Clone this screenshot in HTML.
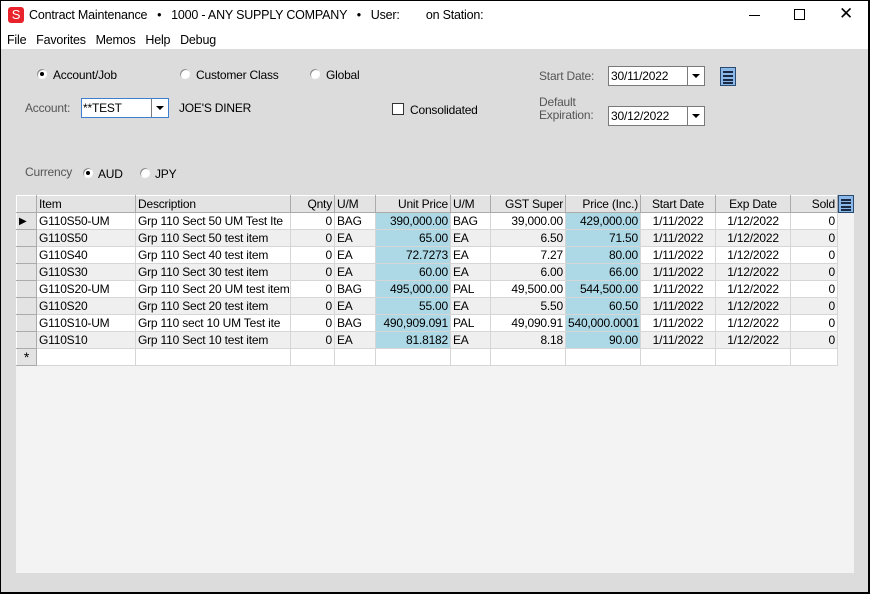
<!DOCTYPE html>
<html><head><style>
*{margin:0;padding:0;box-sizing:border-box}
body{width:870px;height:594px;overflow:hidden;background:#000;font-family:"Liberation Sans",sans-serif;font-size:12px;color:#000;position:relative;letter-spacing:-0.2px}
.a{position:absolute;white-space:nowrap}
#win{position:absolute;left:1px;top:1px;width:867px;height:591px;background:#dcdcdc}
#title{position:absolute;left:0;top:0;width:867px;height:30px;background:#fff}
#menu{position:absolute;left:0;top:30px;width:867px;height:18px;background:#fff}
.lbl{color:#555;}
.radio{position:absolute;width:12px;height:12px;border-radius:50%;background:#fff;border:1px solid #ddd;box-shadow:inset 1px 1px 0 #888}
.radio.on::after{content:"";position:absolute;left:3px;top:3px;width:4px;height:4px;border-radius:50%;background:#000}
.box{position:absolute;background:#fff;border:1px solid #7a7a7a}
.dd{position:absolute;right:0;top:0;bottom:0;width:17px;border-left:1px solid #7a7a7a;background:#fff}
.dd::after{content:"";position:absolute;left:4px;top:7px;border-left:4px solid transparent;border-right:4px solid transparent;border-top:4px solid #000}
.ham{position:absolute;background:#8ab8e8;border:1px solid #2a4a70}
.ham i{position:absolute;left:2px;right:2px;height:2px;background:#1a2a44}
table{border-collapse:collapse;position:absolute;left:15px;top:194px;table-layout:fixed;width:821px}
td{height:17px;border:1px solid #d6d6d6;padding:0 2px;font-size:12px;overflow:hidden;white-space:nowrap;line-height:15px}
tr.h td{background:#e3e3e3;border-color:#fff #ababab #ababab #fff;border-width:1px}
td.rh{background:#e3e3e3;border-color:#fff #ababab #ababab #fff}
.r{text-align:right}
.c{text-align:center}
tr.o td{background:#fff}
tr.e td{background:#efefef}
tr.o td.b,tr.e td.b{background:#add8e6}
tr td.rh{background:#e3e3e3 !important}
</style></head><body>
<div id="win">
<div id="title">
 <div class="a" style="left:7px;top:6px;width:16px;height:16px;background:#e8232c;border-radius:3px;color:#fff;font-size:13px;text-align:center;line-height:16px">S</div>
 <div class="a" style="left:28px;top:7px;font-size:12.5px">Contract Maintenance &nbsp;&nbsp;•&nbsp;&nbsp; 1000 - ANY SUPPLY COMPANY &nbsp;&nbsp;•&nbsp;&nbsp; User: &nbsp;&nbsp;&nbsp;&nbsp;&nbsp;&nbsp;&nbsp;on Station:</div>
 <div class="a" style="left:748px;top:14px;width:11px;height:1px;background:#000"></div>
 <div class="a" style="left:793px;top:8px;width:11px;height:11px;border:1px solid #000"></div>
 <div class="a" style="left:838px;top:3px;font-size:17px;line-height:20px">✕</div>
</div>
<div id="menu"><div class="a" style="left:6px;top:2px;font-size:12.5px">File &nbsp;&nbsp;Favorites &nbsp;&nbsp;Memos &nbsp;&nbsp;Help &nbsp;&nbsp;Debug</div></div>

<div class="radio on" style="left:35px;top:67px"></div><div class="a" style="left:52px;top:67px">Account/Job</div>
<div class="radio" style="left:178px;top:67px"></div><div class="a" style="left:195px;top:67px">Customer Class</div>
<div class="radio" style="left:308px;top:67px"></div><div class="a" style="left:325px;top:67px">Global</div>

<div class="a lbl" style="left:24px;top:100px">Account:</div>
<div class="box" style="left:80px;top:97px;width:88px;height:20px;border-color:#3c7fd0"><div class="a" style="left:1px;top:2px">**TEST</div><div class="dd"></div></div>
<div class="a" style="left:178px;top:100px">JOE'S DINER</div>
<div class="a" style="left:391px;top:102px;width:12px;height:12px;background:#fff;border:1px solid #333"></div>
<div class="a" style="left:409px;top:102px">Consolidated</div>

<div class="a lbl" style="left:538px;top:68px">Start Date:</div>
<div class="box" style="left:607px;top:65px;width:97px;height:20px"><div class="a" style="left:2px;top:2px">30/11/2022</div><div class="dd"></div></div>
<div class="ham" style="left:719px;top:66px;width:16px;height:19px"><i style="top:3px"></i><i style="top:7px"></i><i style="top:11px"></i><i style="top:14px"></i></div>
<div class="a lbl" style="left:538px;top:95px;line-height:13px">Default<br>Expiration:</div>
<div class="box" style="left:607px;top:105px;width:97px;height:20px"><div class="a" style="left:2px;top:2px">30/12/2022</div><div class="dd"></div></div>

<div class="a lbl" style="left:24px;top:164px">Currency</div>
<div class="radio on" style="left:81px;top:166px"></div><div class="a" style="left:97px;top:166px">AUD</div>
<div class="radio" style="left:138px;top:166px"></div><div class="a" style="left:154px;top:166px">JPY</div>

<div class="a" style="left:15px;top:194px;width:838px;height:378px;background:#f3f3f3"></div>
<table>
<colgroup><col style="width:20px"><col style="width:99px"><col style="width:155px"><col style="width:44px"><col style="width:41px"><col style="width:75px"><col style="width:40px"><col style="width:75px"><col style="width:75px"><col style="width:75px"><col style="width:75px"><col style="width:47px"></colgroup>
<tr class="h"><td></td><td>Item</td><td>Description</td><td class="r">Qnty</td><td>U/M</td><td class="r">Unit Price</td><td>U/M</td><td class="r">GST Super</td><td class="r">Price (Inc.)</td><td class="c">Start Date</td><td class="c">Exp Date</td><td class="r">Sold</td></tr>
<tr class="o"><td class="rh" style="font-size:10px">&#9654;</td><td>G110S50-UM</td><td>Grp 110 Sect 50 UM Test Ite</td><td class="r">0</td><td>BAG</td><td class="r b">390,000.00</td><td>BAG</td><td class="r">39,000.00</td><td class="r b">429,000.00</td><td class="c">1/11/2022</td><td class="c">1/12/2022</td><td class="r">0</td></tr>
<tr class="e"><td class="rh"></td><td>G110S50</td><td>Grp 110 Sect 50 test item</td><td class="r">0</td><td>EA</td><td class="r b">65.00</td><td>EA</td><td class="r">6.50</td><td class="r b">71.50</td><td class="c">1/11/2022</td><td class="c">1/12/2022</td><td class="r">0</td></tr>
<tr class="o"><td class="rh"></td><td>G110S40</td><td>Grp 110 Sect 40 test item</td><td class="r">0</td><td>EA</td><td class="r b">72.7273</td><td>EA</td><td class="r">7.27</td><td class="r b">80.00</td><td class="c">1/11/2022</td><td class="c">1/12/2022</td><td class="r">0</td></tr>
<tr class="e"><td class="rh"></td><td>G110S30</td><td>Grp 110 Sect 30 test item</td><td class="r">0</td><td>EA</td><td class="r b">60.00</td><td>EA</td><td class="r">6.00</td><td class="r b">66.00</td><td class="c">1/11/2022</td><td class="c">1/12/2022</td><td class="r">0</td></tr>
<tr class="o"><td class="rh"></td><td>G110S20-UM</td><td>Grp 110 Sect 20 UM test item</td><td class="r">0</td><td>BAG</td><td class="r b">495,000.00</td><td>PAL</td><td class="r">49,500.00</td><td class="r b">544,500.00</td><td class="c">1/11/2022</td><td class="c">1/12/2022</td><td class="r">0</td></tr>
<tr class="e"><td class="rh"></td><td>G110S20</td><td>Grp 110 Sect 20 test item</td><td class="r">0</td><td>EA</td><td class="r b">55.00</td><td>EA</td><td class="r">5.50</td><td class="r b">60.50</td><td class="c">1/11/2022</td><td class="c">1/12/2022</td><td class="r">0</td></tr>
<tr class="o"><td class="rh"></td><td>G110S10-UM</td><td>Grp 110 sect 10 UM Test ite</td><td class="r">0</td><td>BAG</td><td class="r b">490,909.091</td><td>PAL</td><td class="r">49,090.91</td><td class="r b">540,000.0001</td><td class="c">1/11/2022</td><td class="c">1/12/2022</td><td class="r">0</td></tr>
<tr class="e"><td class="rh"></td><td>G110S10</td><td>Grp 110 Sect 10 test item</td><td class="r">0</td><td>EA</td><td class="r b">81.8182</td><td>EA</td><td class="r">8.18</td><td class="r b">90.00</td><td class="c">1/11/2022</td><td class="c">1/12/2022</td><td class="r">0</td></tr>
<tr class="o"><td class="rh" style="font-size:14px;text-align:center">*</td><td></td><td></td><td></td><td></td><td></td><td></td><td></td><td></td><td></td><td></td><td></td></tr>
</table>
<div class="ham" style="left:837px;top:194px;width:16px;height:18px"><i style="top:3px"></i><i style="top:6px"></i><i style="top:10px"></i><i style="top:13px"></i></div>
</div>
</body></html>
